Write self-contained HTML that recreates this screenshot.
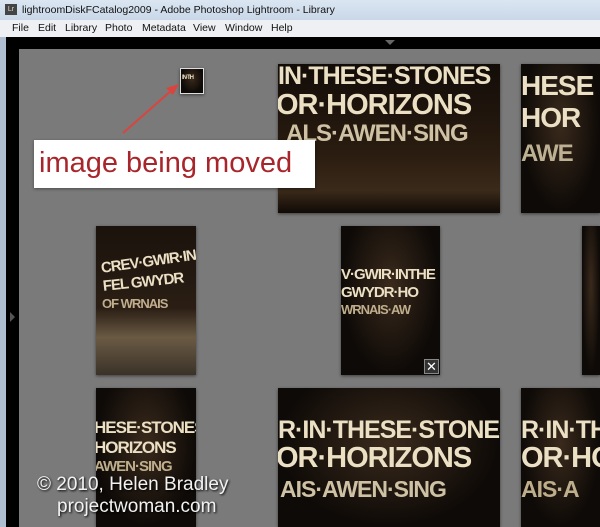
<!DOCTYPE html>
<html><head><meta charset="utf-8"><style>
*{margin:0;padding:0;box-sizing:border-box}
body{width:600px;height:527px;overflow:hidden;background:#000;font-family:"Liberation Sans",sans-serif;position:relative}
.abs{position:absolute}
.title{left:0;top:0;width:600px;height:20px;background:linear-gradient(#dbe6f2,#c9d7e8);font-size:10.5px;color:#111}
.menu{left:0;top:20px;width:600px;height:17px;background:#eef0f3;font-size:10.5px;color:#111}
.menu span{position:absolute;top:2px}
.grid{left:19px;top:49px;width:581px;height:478px;background:#7a7a7a}
.ph{position:absolute;background:radial-gradient(ellipse at 50% 40%,#3a2a1c,#0e0a07 70%);overflow:hidden;box-shadow:0 1px 3px rgba(0,0,0,.5)}
.ph b{position:absolute;white-space:nowrap;color:#ece0c4;font-weight:bold;font-family:"Liberation Sans Narrow","Liberation Sans",sans-serif;letter-spacing:-1px;transform-origin:0 0}
</style></head><body>
<div class="abs title"><div class="abs" style="left:5px;top:4px;width:12px;height:11px;background:#444;color:#ddd;font-size:7px;line-height:11px;text-align:center">Lr</div><span class="abs" style="left:22px;top:4px">lightroomDiskFCatalog2009 - Adobe Photoshop Lightroom - Library</span></div>
<div class="abs menu"><span style="left:12px">File</span><span style="left:38px">Edit</span><span style="left:65px">Library</span><span style="left:105px">Photo</span><span style="left:142px">Metadata</span><span style="left:193px">View</span><span style="left:225px">Window</span><span style="left:271px">Help</span></div>
<div class="abs" style="left:0;top:37px;width:6px;height:490px;background:#aebdd0"></div>
<div class="abs" style="left:385px;top:40px;width:0;height:0;border-left:5px solid transparent;border-right:5px solid transparent;border-top:5px solid #666"></div>
<div class="abs" style="left:10px;top:312px;width:0;height:0;border-top:5px solid transparent;border-bottom:5px solid transparent;border-left:5px solid #555"></div>
<div class="abs grid"></div>

<div class="ph" style="left:180px;top:68px;width:24px;height:26px;border:1px solid #ddd"><b style="font-size:6px;left:1px;top:6px">IN·TH</b></div>

<div class="ph" style="left:278px;top:64px;width:222px;height:149px;background:linear-gradient(#120c08 0%,#2a1c10 60%,#3a2a1a 85%,#100a06 100%)">
<b style="font-size:25px;left:0;top:-2px">IN·THESE·STONES</b>
<b style="font-size:29px;left:-2px;top:25px">OR·HORIZONS</b>
<b style="font-size:24px;left:8px;top:56px;color:#cfc2a4">ALS·AWEN·SING</b></div>

<div class="ph" style="left:521px;top:64px;width:79px;height:149px">
<b style="font-size:28px;left:0;top:6px">HESE</b><b style="font-size:28px;left:0;top:38px">HOR</b><b style="font-size:24px;left:0;top:76px;color:#bdb093">AWE</b></div>

<div class="ph" style="left:96px;top:226px;width:100px;height:149px;background:linear-gradient(#1a120c 0%,#2a1e14 55%,#6a5a44 75%,#3a3228 100%)">
<b style="font-size:15px;left:4px;top:34px;transform:rotate(-8deg)">CREV·GWIR·IN</b><b style="font-size:15px;left:6px;top:52px;transform:rotate(-6deg)">FEL GWYDR</b><b style="font-size:13px;left:6px;top:70px;color:#bfae8c">OF WRNAIS</b></div>

<div class="ph" style="left:341px;top:226px;width:99px;height:149px">
<b style="font-size:15px;left:0;top:40px">V·GWIR·INTHE</b><b style="font-size:15px;left:0;top:58px">GWYDR·HO</b><b style="font-size:13px;left:0;top:76px;color:#bfae8c">WRNAIS·AW</b>
<div class="abs" style="right:1px;bottom:1px;width:15px;height:15px;background:#333;border:1px solid #888;color:#fff;font-size:13px;line-height:13px;text-align:center">✕</div></div>

<div class="ph" style="left:582px;top:226px;width:18px;height:149px"></div>

<div class="ph" style="left:96px;top:388px;width:100px;height:139px">
<b style="font-size:17px;left:-2px;top:30px">HESE·STONES</b><b style="font-size:17px;left:-2px;top:50px">HORIZONS</b><b style="font-size:15px;left:-2px;top:70px;color:#bfae8c">AWEN·SING</b></div>

<div class="ph" style="left:278px;top:388px;width:222px;height:139px">
<b style="font-size:25px;left:0;top:28px">R·IN·THESE·STONES</b><b style="font-size:29px;left:-2px;top:54px">OR·HORIZONS</b><b style="font-size:23px;left:2px;top:88px;color:#cfc2a4">AIS·AWEN·SING</b></div>

<div class="ph" style="left:521px;top:388px;width:79px;height:139px">
<b style="font-size:25px;left:0;top:28px">R·IN·THE</b><b style="font-size:29px;left:0;top:54px">OR·HO</b><b style="font-size:23px;left:0;top:88px;color:#bfae8c">AIS·A</b></div>

<div class="abs" style="left:34px;top:140px;width:281px;height:48px;background:#fff;box-shadow:0 1px 3px rgba(0,0,0,.4);color:#a8262b;font-size:29px;line-height:46px;padding-left:5px">image being moved</div>
<svg class="abs" style="left:0;top:0" width="600" height="527"><line x1="123" y1="133" x2="172" y2="90" stroke="#d9453e" stroke-width="2"/><polygon points="179,84 166,88 173,95" fill="#d9453e"/></svg>

<div class="abs" style="left:37px;top:474px;color:#f2f2f2;font-size:19px;line-height:22px;text-shadow:1px 1px 2px #000">© 2010, Helen Bradley<br><span style="padding-left:20px">projectwoman.com</span></div>
</body></html>
